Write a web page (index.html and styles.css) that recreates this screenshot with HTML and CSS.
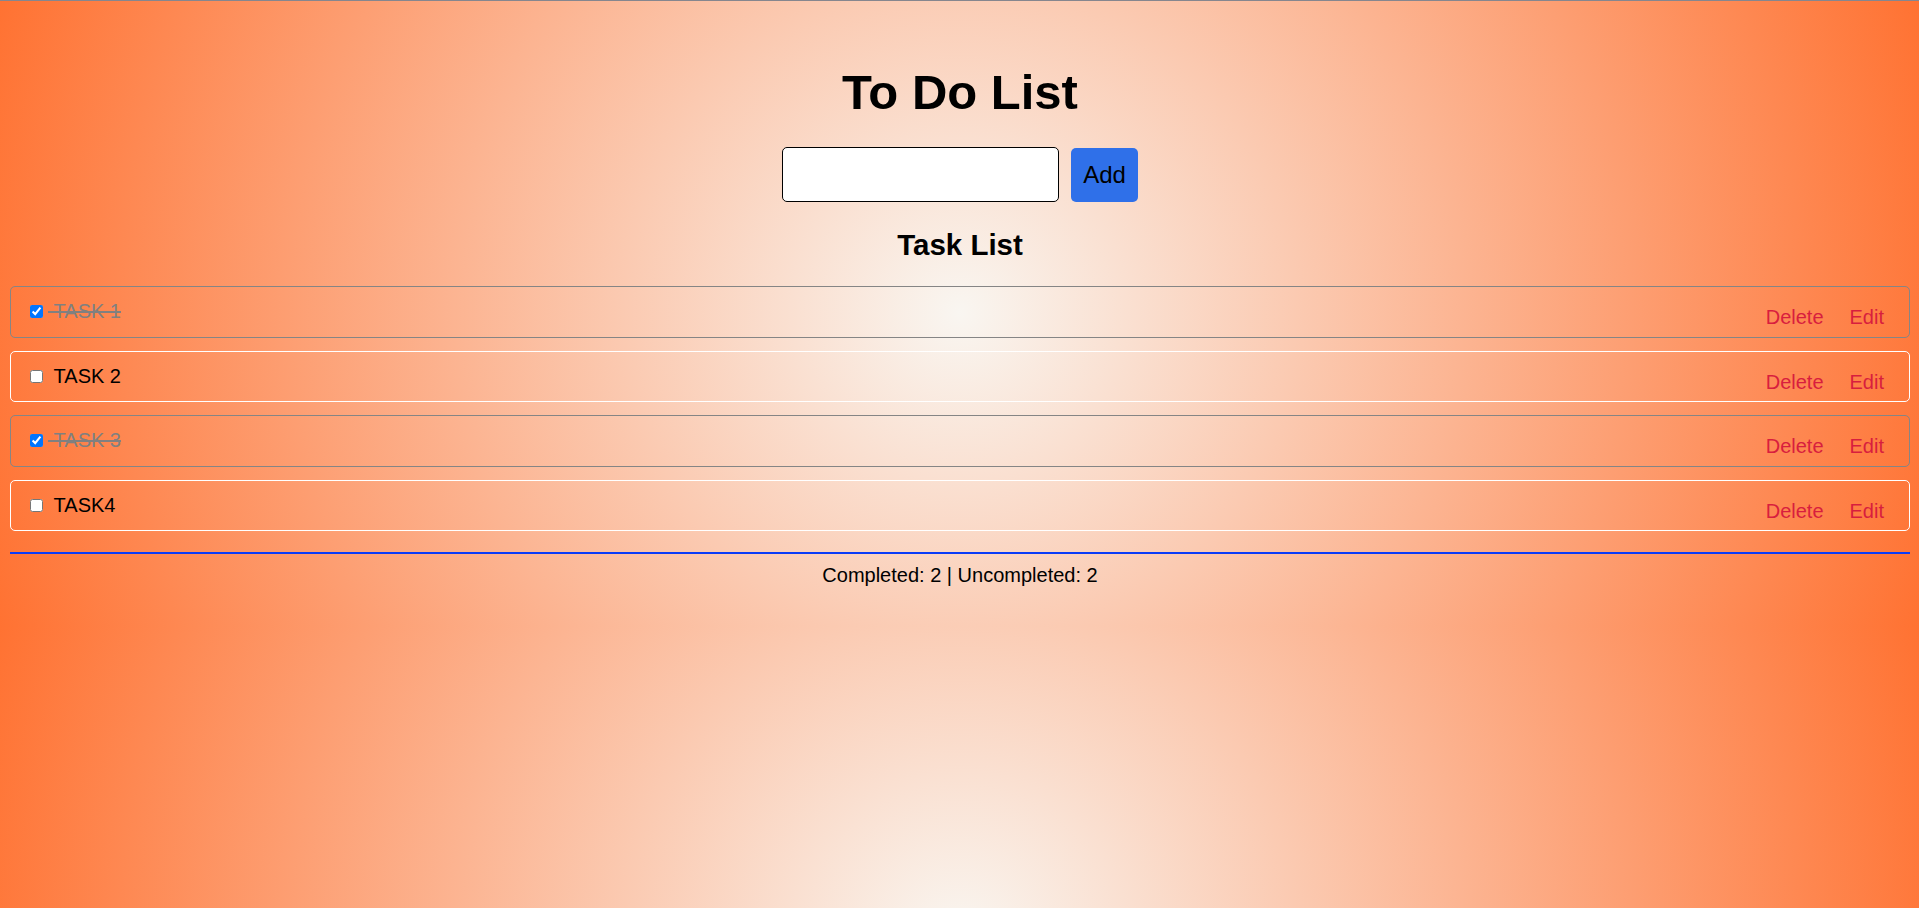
FILE: index.html
```html
<!DOCTYPE html>
<html lang="en">
<head>
<meta charset="utf-8">
<title>To Do List</title>
<link rel="stylesheet" href="styles.css">
</head>
<body>
<div class="app">
  <h1 class="title">To Do List</h1>
  <div class="add-row">
    <input class="task-input" type="text">
    <button class="add-btn">Add</button>
  </div>
  <h2 class="subtitle">Task List</h2>
  <ul class="task-list">
    <li class="task done">
      <label class="task-label"><input type="checkbox" checked><span class="task-text">&nbsp;TASK 1</span></label>
      <div class="actions"><button class="act">Delete</button><button class="act">Edit</button></div>
    </li>
    <li class="task">
      <label class="task-label"><input type="checkbox"><span class="task-text">&nbsp;TASK 2</span></label>
      <div class="actions"><button class="act">Delete</button><button class="act">Edit</button></div>
    </li>
    <li class="task done">
      <label class="task-label"><input type="checkbox" checked><span class="task-text">&nbsp;TASK 3</span></label>
      <div class="actions"><button class="act">Delete</button><button class="act">Edit</button></div>
    </li>
    <li class="task">
      <label class="task-label"><input type="checkbox"><span class="task-text">&nbsp;TASK4</span></label>
      <div class="actions"><button class="act">Delete</button><button class="act">Edit</button></div>
    </li>
  </ul>
  <div class="divider"></div>
  <p class="summary">Completed: 2 | Uncompleted: 2</p>
</div>
</body>
</html>
```

FILE: styles.css
```css
html {
  background: radial-gradient(circle farthest-corner at 50% 50%, #f9f6f1 0%, #ff7232 100%);
  background-size: 100% 626px;
  background-repeat: repeat-y;
  min-height: 100%;
}

body {
  margin: 0;
  font-family: "Liberation Sans", Arial, sans-serif;
  color: #000;
}

body::before {
  content: "";
  position: fixed;
  top: 0;
  left: 0;
  right: 0;
  height: 1px;
  background: #86868e;
}

.app {
  display: flex;
  flex-direction: column;
  align-items: center;
  padding: 64px 9px 0 10px;
}

.title {
  margin: 0;
  font-size: 49px;
  line-height: 56px;
  font-weight: bold;
}

.add-row {
  display: flex;
  align-items: center;
  gap: 12px;
  margin-top: 27px;
}

.task-input {
  box-sizing: border-box;
  width: 277px;
  height: 55px;
  border: 1px solid #000;
  border-radius: 5px;
  background: #fff;
  padding: 0 8px;
  font: 20px "Liberation Sans", Arial, sans-serif;
}

.add-btn {
  box-sizing: border-box;
  height: 54px;
  padding: 0 12px;
  border: none;
  border-radius: 5px;
  background: #2f70e9;
  color: #000;
  font: 24px "Liberation Sans", Arial, sans-serif;
}

.subtitle {
  margin: 26px 0 0;
  font-size: 29.5px;
  line-height: 34px;
  font-weight: bold;
}

.task-list {
  list-style: none;
  margin: 24px 0 0;
  padding: 0;
  align-self: stretch;
  display: flex;
  flex-direction: column;
  gap: 13px;
}

.task {
  box-sizing: border-box;
  height: 51.6px;
  display: flex;
  align-items: center;
  justify-content: space-between;
  padding: 0 19px 0 15px;
  border: 1px solid #fff;
  border-radius: 5px;
}

.task.done {
  border-color: #858585;
}

.task-label {
  display: flex;
  align-items: center;
  font-size: 20px;
  line-height: 23px;
}

.task-label input {
  margin: 3px 3px 3px 4px;
}

.task-text {
  margin-left: 2px;
}

.task.done .task-text {
  color: #808080;
  text-decoration: line-through;
}

.actions {
  display: flex;
  gap: 14px;
  margin-top: 12px;
}

.act {
  border: none;
  background: transparent;
  padding: 0 6px;
  color: #d81e3e;
  font: 20px "Liberation Sans", Arial, sans-serif;
  line-height: 23px;
}

.divider {
  align-self: stretch;
  height: 2px;
  margin-top: 20.5px;
  background: #0a3cf8;
}

.summary {
  margin: 10px 0 0;
  font-size: 20px;
  line-height: 23px;
}
```
